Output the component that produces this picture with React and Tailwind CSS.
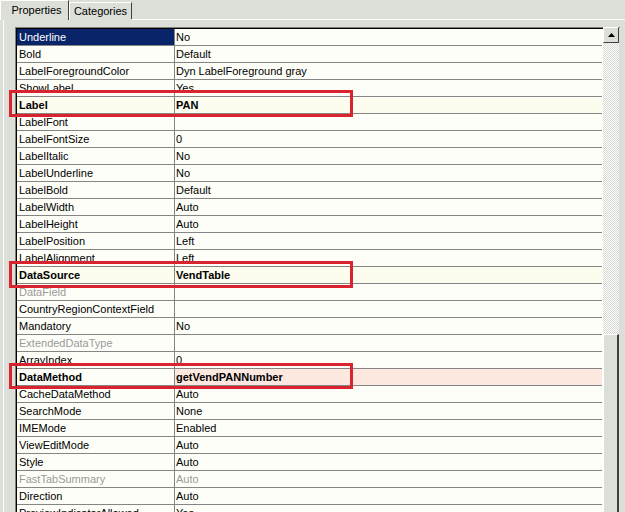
import React from "react";

const rows = [
  { n: "Underline", v: "No", sel: true },
  { n: "Bold", v: "Default" },
  { n: "LabelForegroundColor", v: "Dyn LabelForeground gray" },
  { n: "ShowLabel", v: "Yes" },
  { n: "Label", v: "PAN", bold: true, hl: "yellow" },
  { n: "LabelFont", v: "" },
  { n: "LabelFontSize", v: "0" },
  { n: "LabelItalic", v: "No" },
  { n: "LabelUnderline", v: "No" },
  { n: "LabelBold", v: "Default" },
  { n: "LabelWidth", v: "Auto" },
  { n: "LabelHeight", v: "Auto" },
  { n: "LabelPosition", v: "Left" },
  { n: "LabelAlignment", v: "Left" },
  { n: "DataSource", v: "VendTable", bold: true, hl: "yellow" },
  { n: "DataField", v: "", gray: true },
  { n: "CountryRegionContextField", v: "" },
  { n: "Mandatory", v: "No" },
  { n: "ExtendedDataType", v: "", gray: true },
  { n: "ArrayIndex", v: "0" },
  { n: "DataMethod", v: "getVendPANNumber", bold: true, hl: "pink" },
  { n: "CacheDataMethod", v: "Auto" },
  { n: "SearchMode", v: "None" },
  { n: "IMEMode", v: "Enabled" },
  { n: "ViewEditMode", v: "Auto" },
  { n: "Style", v: "Auto" },
  { n: "FastTabSummary", v: "Auto", gray: true },
  { n: "Direction", v: "Auto" },
  { n: "PreviewIndicatorAllowed", v: "Yes" },
];

function Row({ r }) {
  const nameBg = r.sel
    ? "bg-[#0a246a] text-white"
    : r.hl === "yellow"
    ? "bg-[#fcfcef]"
    : "";
  const valBg =
    r.hl === "yellow" ? "bg-[#fcfcef]" : r.hl === "pink" ? "bg-[#fde8e0]" : "";
  const txt = r.gray ? "text-[#9a9a9a]" : "text-black";
  const weight = r.bold ? "font-bold" : "font-normal";
  return (
    <div className="flex h-[17px] border-b border-[#858585] shrink-0">
      <div
        className={`w-[157px] shrink-0 pl-[2px] leading-[16px] whitespace-nowrap overflow-hidden ${nameBg} ${r.sel ? "" : txt} ${weight}`}
      >
        {r.n}
      </div>
      <div className="w-px shrink-0 bg-[#858585]" />
      <div
        className={`flex-1 pl-[1px] leading-[16px] whitespace-nowrap overflow-hidden ${valBg} ${txt} ${weight}`}
      >
        {r.v}
      </div>
    </div>
  );
}

export default function App() {
  return (
    <div
      className="relative w-[625px] h-[512px] overflow-hidden bg-[#dcdfd7] text-[11px] text-black"
      style={{ fontFamily: '"Liberation Sans", Arial, sans-serif' }}
    >
      {/* Tabs */}
      <div className="flex items-end h-[20px]">
        <div className="h-[20px] w-[69px] pl-[4px] border-l border-t border-white border-r border-r-[#404040] flex items-center justify-center leading-[16px] pb-[2px]">
          Properties
        </div>
        <div className="h-[17px] w-[63px] border-t border-l border-white border-r border-r-[#404040] flex items-center justify-center leading-[14px] mb-[1px]">
          Categories
        </div>
        <div className="flex-1 h-[1px] bg-white" />
      </div>

      {/* Panel */}
      <div className="flex pl-[4px] h-[492px] border-l border-white ml-[3px]">
        <div className="flex mt-[7px] ml-[7px] border-l border-t border-[#808080]">
          <div className="flex w-[587px] border-l border-t border-black bg-[#fefef8]">
            <div className="flex flex-col w-[586px]">
              {rows.map((r) => (
                <Row key={r.n} r={r} />
              ))}
            </div>
            <div className="w-px bg-white" />
          </div>
          {/* Scrollbar */}
          <div className="flex flex-col w-[17px] -mt-px">
            <div className="h-[16px] w-[16px] bg-[#dcdfd7] border-l border-t border-white border-r border-b border-r-[#404040] border-b-[#404040] flex items-center justify-center">
              <svg width="7" height="4" viewBox="0 0 7 4">
                <polygon points="3.5,0 7,4 0,4" fill="#000" />
              </svg>
            </div>
            <div className="h-[291px] w-[16px] bg-[repeating-conic-gradient(#ffffff_0_25%,#d6d9d1_0_50%)] bg-[length:2px_2px]" />
            <div className="flex-1 w-[16px] bg-[#dcdfd7] border-l border-t border-white border-r-2 border-r-[#404040]" />
          </div>
        </div>
      </div>

      {/* Red highlight boxes */}
      <div className="absolute left-[9px] top-[90px] w-[344px] h-[27px] border-[3px] border-[#d9232e]" />
      <div className="absolute left-[9px] top-[261px] w-[344px] h-[27px] border-[3px] border-[#d9232e]" />
      <div className="absolute left-[9px] top-[363px] w-[344px] h-[26px] border-[3px] border-[#d9232e]" />
    </div>
  );
}
